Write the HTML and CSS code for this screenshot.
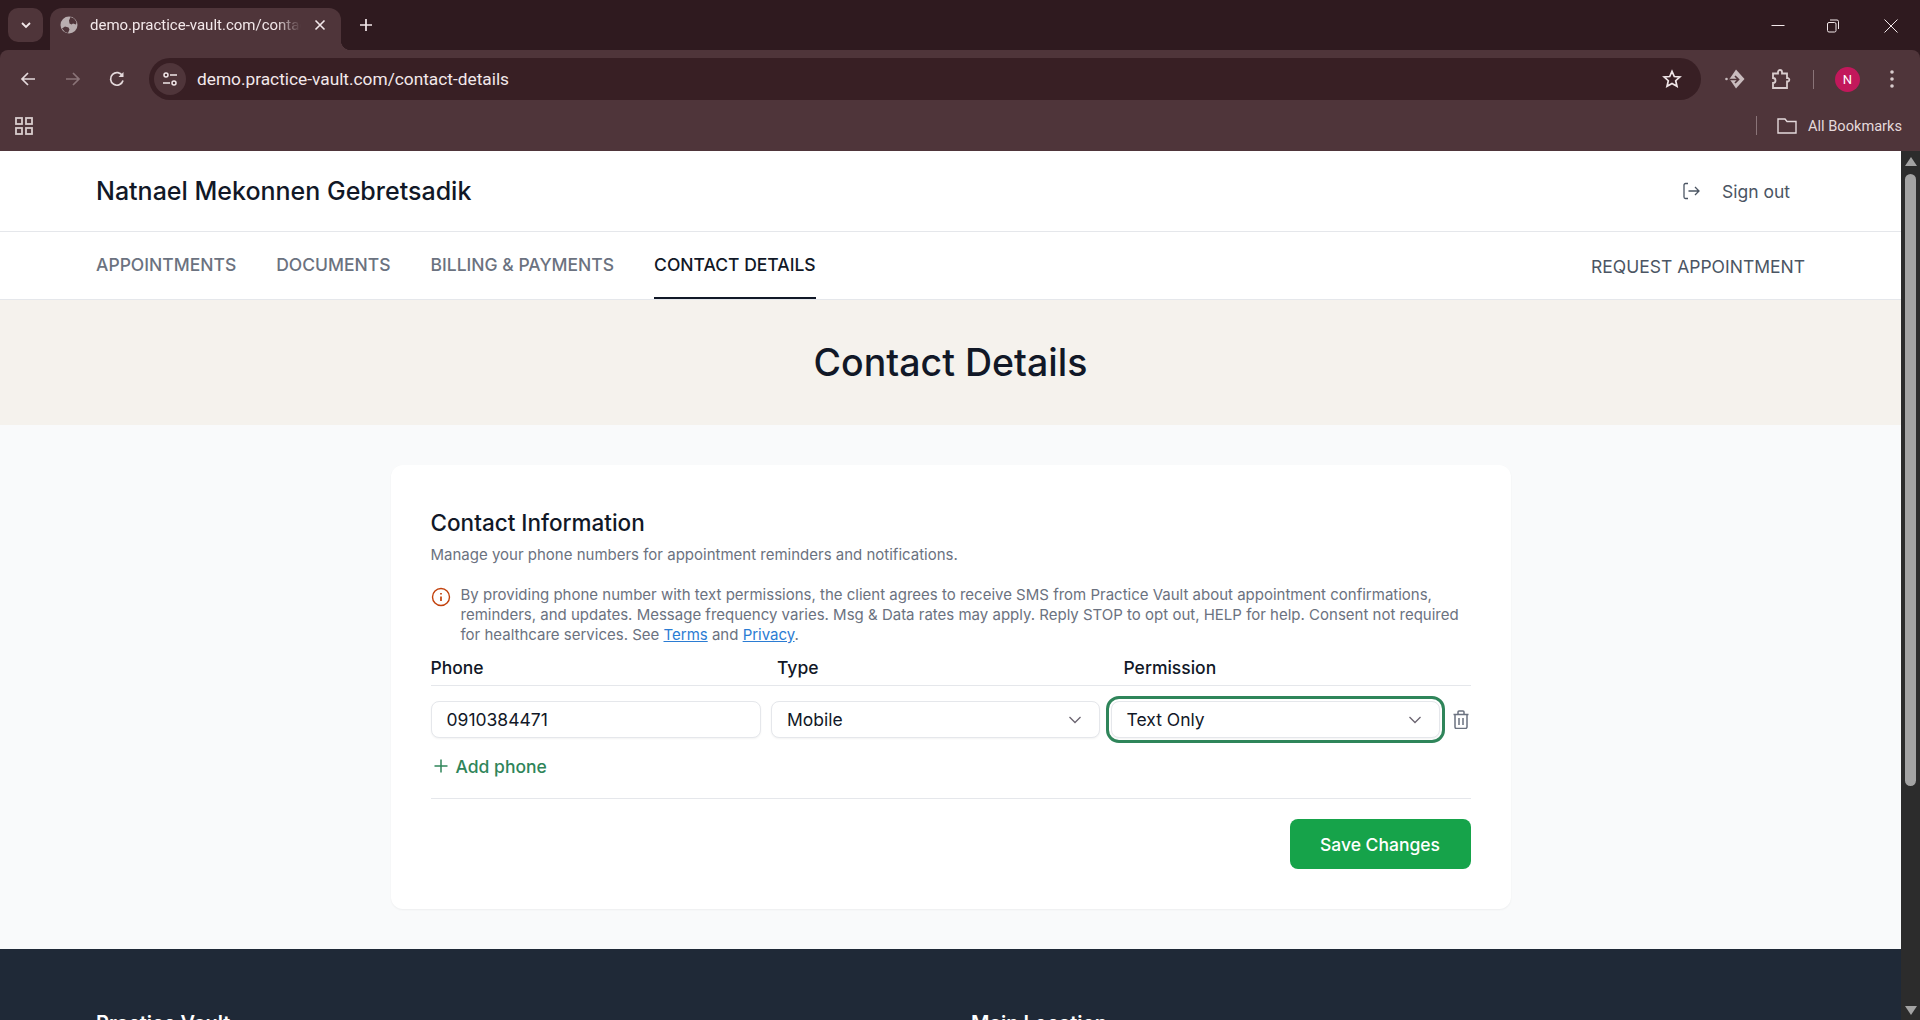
FILE: index.html
```html
<!DOCTYPE html>
<html lang="en">
<head>
    <meta charset="UTF-8">
    <title>Contact Details</title>
    <link rel="stylesheet" href="styles.css">
</head>
<body>
    <div class="browser">
        <div class="tabstrip">
            <div class="tab-search">
                <svg width="14" height="14" viewBox="0 0 14 14"><path d="M3 5l4 4 4-4" fill="none" stroke="#f3e8ea" stroke-width="1.8"/></svg>
            </div>
            <div class="tab">
                <svg class="tab-globe" width="18" height="18" viewBox="0 0 18 18"><circle cx="9" cy="9" r="8.500" fill="#b9aeb0"/><path d="M10.500 1l3.500 1.500 2.500 3.500-.5 2.500-3-1-1.500 1-2-1-.5-3zM2 12.500l3-2 3.500 1 1 2-1.500 3.500-3-1z" fill="#4f353a"/></svg>
                <span class="tab-title">demo.practice-vault.com/contact-details</span>
                <svg class="tab-close" width="14" height="14" viewBox="0 0 14 14"><path d="M2.500 2.500l9 9M11.500 2.500l-9 9" stroke="#f3e8ea" stroke-width="1.600"/></svg>
            </div>
            <svg class="new-tab" width="16" height="16" viewBox="0 0 16 16"><path d="M8 2v12M2 8h12" stroke="#f3e8ea" stroke-width="1.700"/></svg>
            <div class="window-btns">
                <svg width="14" height="14" viewBox="0 0 14 14"><path d="M0.500 6.500h13" stroke="#f3e8ea" stroke-width="1"/></svg>
                <svg width="14" height="14" viewBox="0 0 14 14"><rect x="1.500" y="3.500" width="8.500" height="9.500" rx="1.500" fill="none" stroke="#f3e8ea"/><path d="M4 1h7a1.500 1.500 0 0 1 1.500 1.500V10" fill="none" stroke="#f3e8ea"/></svg>
                <svg width="14" height="14" viewBox="0 0 14 14"><path d="M0.500 0.500l13 13M13.500 0.500l-13 13" stroke="#f3e8ea" stroke-width="1"/></svg>
            </div>
        </div>
        <div class="toolbar">
            <svg class="nav-icon" width="18" height="18" viewBox="0 0 18 18"><path d="M16 9H3M9 3L3 9l6 6" fill="none" stroke="#e4d9db" stroke-width="1.700"/></svg>
            <svg class="nav-icon" width="18" height="18" viewBox="0 0 18 18"><path d="M2 9h13M9 3l6 6-6 6" fill="none" stroke="#8a7478" stroke-width="1.700"/></svg>
            <svg class="nav-icon" width="18" height="18" viewBox="0 0 18 18"><path d="M14.500 6A6.300 6.300 0 1 0 15 10.500" fill="none" stroke="#e4d9db" stroke-width="1.700"/><path d="M15.500 2v5h-5z" fill="#e4d9db"/></svg>
            <div class="omnibox">
                <div class="site-info">
                    <svg width="16" height="16" viewBox="0 0 16 16" fill="none" stroke="#f0e6e8" stroke-width="1.500"><circle cx="4" cy="4" r="2"/><path d="M8 4h7M1 12h7"/><circle cx="12" cy="12" r="2"/></svg>
                </div>
                <span class="url">demo.practice-vault.com/contact-details</span>
                <svg class="star" width="20" height="20" viewBox="0 0 20 20"><path d="M10 2.300l2.300 5.200 5.600.5-4.200 3.700 1.300 5.500L10 14.400l-5 2.800 1.300-5.500L2.100 8l5.600-.5z" fill="none" stroke="#f0e6e8" stroke-width="1.700"/></svg>
            </div>
            <svg class="ext-icon" width="20" height="20" viewBox="0 0 20 20"><path d="M11 0.500l8.500 9.500-8.500 9.500L4.500 10z" fill="#c9bcbe"/><circle cx="1.500" cy="10" r="1.300" fill="#c9bcbe"/><path d="M5 10.500h8.500M10 7l3.500 3.500L10 14" fill="none" stroke="#4f353a" stroke-width="1.700"/></svg>
            <svg class="ext-icon puzzle" width="20" height="20" viewBox="0 0 20 20"><path d="M2 4.500h5V3a2 2 0 0 1 4 0v1.500h5v4.500h1a1.800 1.800 0 0 1 0 3.500h-1v6.500H2v-5a2.500 2.500 0 0 0 0-5z" fill="none" stroke="#d8cccd" stroke-width="1.800"/></svg>
            <div class="tool-sep"></div>
            <div class="avatar">N</div>
            <svg class="menu-icon" width="6" height="20" viewBox="0 0 6 20"><circle cx="3" cy="3" r="1.800" fill="#d8cccd"/><circle cx="3" cy="10" r="1.800" fill="#d8cccd"/><circle cx="3" cy="17" r="1.800" fill="#d8cccd"/></svg>
        </div>
        <div class="bookmarks">
            <svg width="18" height="18" viewBox="0 0 18 18" fill="none" stroke="#d8cccd" stroke-width="1.800"><rect x="1" y="1" width="6" height="6"/><rect x="11" y="1" width="6" height="6"/><rect x="1" y="11" width="6" height="6"/><rect x="11" y="11" width="6" height="6"/></svg>
            <div class="bookmarks-right">
                <div class="tool-sep short"></div>
                <svg width="20" height="16" viewBox="0 0 20 16"><path d="M1 1h7l2 2.500h9V15H1z" fill="none" stroke="#e4d9db" stroke-width="1.400"/></svg>
                <span>All Bookmarks</span>
            </div>
        </div>
    </div>

    <div class="viewport">
        <div class="page">
            <header class="site-header">
                <h1 class="client-name">Natnael Mekonnen Gebretsadik</h1>
                <a class="sign-out">
                    <svg width="20" height="20" viewBox="0 0 20 20" fill="none" stroke="#4b5563" stroke-width="1.300"><path d="M7 2.500H4.500A1.500 1.500 0 0 0 3 4v12a1.500 1.500 0 0 0 1.500 1.500H7M7.500 10H18M14 6l4 4-4 4"/></svg>
                    <span>Sign out</span>
                </a>
            </header>
            <nav class="site-nav">
                <a class="nav-link">APPOINTMENTS</a>
                <a class="nav-link">DOCUMENTS</a>
                <a class="nav-link">BILLING &amp; PAYMENTS</a>
                <a class="nav-link active">CONTACT DETAILS</a>
                <a class="nav-request">REQUEST APPOINTMENT</a>
            </nav>
            <section class="hero">
                <h2>Contact Details</h2>
            </section>
            <main class="content">
                <div class="card">
                    <h3>Contact Information</h3>
                    <p class="subtitle">Manage your phone numbers for appointment reminders and notifications.</p>
                    <div class="notice">
                        <svg width="20" height="20" viewBox="0 0 20 20" fill="none" stroke="#c2410c" stroke-width="1.400"><circle cx="10" cy="10" r="8.500"/><path d="M10 9.500v4.500M10 6v1.600" stroke-width="1.700"/></svg>
                        <p>By providing phone number with text permissions, the client agrees to receive SMS from Practice Vault about appointment confirmations, reminders, and updates. Message frequency varies. Msg &amp; Data rates may apply. Reply STOP to opt out, HELP for help. Consent not required for healthcare services. See <a>Terms</a> and <a>Privacy</a>.</p>
                    </div>
                    <div class="phone-head">
                        <span>Phone</span>
                        <span>Type</span>
                        <span>Permission</span>
                    </div>
                    <div class="phone-row">
                        <div class="field">0910384471</div>
                        <div class="field select">Mobile
                            <svg width="16" height="16" viewBox="0 0 16 16"><path d="M2.500 5l5.500 5.500L13.500 5" fill="none" stroke="#6b6470" stroke-width="1.300"/></svg>
                        </div>
                        <div class="field select focused">Text Only
                            <svg width="16" height="16" viewBox="0 0 16 16"><path d="M2.500 5l5.500 5.500L13.500 5" fill="none" stroke="#6b6470" stroke-width="1.300"/></svg>
                        </div>
                        <svg class="trash" width="16" height="19" viewBox="0 0 16 19" fill="none" stroke="#6b7280" stroke-width="1.500"><path d="M0.500 4.500h15M5 4.500V2a1 1 0 0 1 1-1h4a1 1 0 0 1 1 1v2.500M2 4.500V17a1.500 1.500 0 0 0 1.500 1.500h9A1.500 1.500 0 0 0 14 17V4.500M6 8v7M10 8v7"/></svg>
                    </div>
                    <a class="add-phone">
                        <svg width="18" height="18" viewBox="0 0 18 18"><path d="M9 2.500v13M2.500 9h13" stroke="#2f855a" stroke-width="1.500"/></svg>
                        Add phone
                    </a>
                    <div class="card-actions">
                        <button class="save-btn">Save Changes</button>
                    </div>
                </div>
            </main>
            <footer class="site-footer">
                <h4>Practice Vault</h4>
                <h4>Main Location</h4>
            </footer>
        </div>
        <div class="scrollbar">
            <div class="arrow-up"></div>
            <div class="thumb"></div>
            <div class="arrow-down"></div>
        </div>
    </div>
</body>
</html>
```

FILE: styles.css
```css
html, body {
    margin: 0;
    padding: 0;
    height: 1020px;
    overflow: hidden;
}

body {
    display: flex;
    flex-direction: column;
    font-family: Inter, "Liberation Sans", sans-serif;
    color: #111827;
}

h1, h2, h3, h4, p {
    margin: 0;
}

/* Browser chrome */
.browser {
    height: 151px;
    background: #2f1a1f;
    font-family: Roboto, "Liberation Sans", sans-serif;
    color: #f3e8ea;
    flex-shrink: 0;
}

.tabstrip {
    height: 50px;
    display: flex;
    align-items: flex-end;
    padding-left: 8px;
    box-sizing: border-box;
}

.tab-search {
    width: 35px;
    height: 34px;
    margin-bottom: 8px;
    background: #4f353a;
    border-radius: 10px;
    display: flex;
    align-items: center;
    justify-content: center;
}

.tab {
    position: relative;
    width: 291px;
    height: 42px;
    margin-left: 7px;
    background: #4f353a;
    border-radius: 12px 12px 0 0;
    display: flex;
    align-items: center;
    gap: 12px;
    padding: 0 14px 8px 10px;
    box-sizing: border-box;
    font-size: 15px;
}

/* concave corner where the tab meets the toolbar */
.tab::after {
    content: "";
    position: absolute;
    right: -10px;
    bottom: 0;
    width: 10px;
    height: 10px;
    background: radial-gradient(circle at 100% 0, transparent 10px, #4f353a 10.500px);
}

.tab-globe, .tab-close {
    flex-shrink: 0;
}

.tab-title {
    flex: 1;
    overflow: hidden;
    white-space: nowrap;
    -webkit-mask-image: linear-gradient(90deg, #000 88%, transparent);
    mask-image: linear-gradient(90deg, #000 88%, transparent);
}

.new-tab {
    margin: 0 0 17px 17px;
}

.window-btns {
    margin-left: auto;
    height: 48px;
    display: flex;
    align-items: center;
    padding: 0 22px 0 0;
}

.window-btns svg:nth-child(2) {
    margin: 0 44px 0 41px;
}

.toolbar {
    height: 58px;
    background: #4f353a;
    border-radius: 8px 8px 0 0;
    display: flex;
    align-items: center;
    padding-left: 19px;
    box-sizing: border-box;
}

.nav-icon {
    margin-right: 27px;
}

.nav-icon:nth-child(2) {
    margin-right: 26px;
}

.nav-icon:nth-child(3) {
    margin-right: 23px;
}

.omnibox {
    width: 1552px;
    height: 42px;
    background: #381f24;
    border-radius: 21px;
    display: flex;
    align-items: center;
    padding: 0 19px 0 5px;
    box-sizing: border-box;
    font-size: 17.300px;
}

.site-info {
    width: 32px;
    height: 32px;
    border-radius: 50%;
    background: #4f353a;
    display: flex;
    align-items: center;
    justify-content: center;
    margin-right: 11px;
}

.url {
    flex: 1;
    color: #f3e8ea;
}

.ext-icon {
    margin-left: 24px;
}

.ext-icon.puzzle {
    margin-left: 26px;
}

.tool-sep {
    width: 1px;
    height: 19px;
    background: #8a7478;
    margin-left: 22px;
}

.avatar {
    width: 25px;
    height: 25px;
    margin-left: 21px;
    border-radius: 50%;
    background: #c2185b;
    color: #fff;
    font-size: 13px;
    display: flex;
    align-items: center;
    justify-content: center;
}

.menu-icon {
    margin-left: 29px;
}

.bookmarks {
    height: 43px;
    background: #4f353a;
    display: flex;
    align-items: center;
    padding: 0 18px 8px 15px;
    box-sizing: border-box;
}

.bookmarks-right {
    margin-left: auto;
    display: flex;
    align-items: center;
    font-size: 14.600px;
    color: #e4d9db;
}

.bookmarks-right svg {
    margin: 0 11px 0 20px;
}

.tool-sep.short {
    margin-left: 0;
}

/* Page */
.viewport {
    flex: 1;
    display: flex;
    min-height: 0;
}

.page {
    flex: 1;
    min-width: 0;
    overflow: hidden;
    background: #f9fafb;
}

.site-header {
    height: 80px;
    background: #fff;
    border-bottom: 1px solid #e5e7eb;
    display: flex;
    align-items: center;
    justify-content: space-between;
    padding: 0 111px 0 96px;
}

.client-name {
    font-size: 25px;
    font-weight: 500;
    color: #111827;
}

.sign-out {
    display: flex;
    align-items: center;
    gap: 21px;
    font-size: 17.500px;
    color: #4b5563;
}

.site-nav {
    height: 67px;
    background: #fff;
    border-bottom: 1px solid #e5e7eb;
    display: flex;
    gap: 40px;
    padding: 0 96px;
}

.nav-link {
    font-size: 17.500px;
    font-weight: 500;
    color: #6b7280;
    line-height: 66px;
    border-bottom: 2px solid transparent;
    height: 67px;
    box-sizing: border-box;
}

.nav-link.active {
    color: #111827;
    border-bottom-color: #111827;
}

.nav-request {
    margin-left: auto;
    font-size: 17.500px;
    color: #4b5563;
    line-height: 70px;
}

.hero {
    height: 125px;
    background: #f5f2ed;
    display: flex;
    align-items: center;
    justify-content: center;
}

.hero h2 {
    font-size: 37.500px;
    font-weight: 500;
    color: #111827;
}

.content {
    padding: 40px 0;
}

.card {
    width: 1120px;
    height: 444px;
    margin: 0 auto;
    background: #fff;
    border-radius: 12px;
    box-shadow: 0 1px 2px rgba(0, 0, 0, 0.05);
    padding: 44px 40px 40px;
    box-sizing: border-box;
}

.card h3 {
    font-size: 22.500px;
    font-weight: 500;
    line-height: 28px;
}

.subtitle {
    margin-top: 8px;
    font-size: 15px;
    line-height: 20px;
    color: #6b7280;
}

.notice {
    margin-top: 20px;
    display: flex;
    gap: 10px;
    font-size: 15px;
    line-height: 20px;
    color: #6b7280;
}

.notice svg {
    flex-shrink: 0;
    margin-top: 2px;
}

.notice a {
    color: #2b7cd3;
    text-decoration: underline;
}

.phone-head {
    margin-top: 11px;
    display: grid;
    grid-template-columns: repeat(3, 346.500px);
    height: 29px;
    border-bottom: 1px solid #e5e7eb;
    font-size: 17.500px;
    font-weight: 500;
    line-height: 24px;
}

.phone-row {
    margin-top: 15px;
    display: flex;
    align-items: center;
    gap: 10.500px;
}

.field {
    width: 330px;
    height: 37px;
    background: #fff;
    border: 1px solid #e5e7eb;
    border-radius: 8px;
    box-shadow: 0 1px 2px rgba(0, 0, 0, 0.05);
    display: flex;
    align-items: center;
    justify-content: space-between;
    padding: 0 15px;
    box-sizing: border-box;
    font-size: 17.500px;
    color: #111827;
}

.field.select {
    width: 329px;
    padding-right: 16px;
}

.field.select svg {
    flex-shrink: 0;
}

.field.focused {
    width: 329.500px;
    outline: 3px solid #2f855a;
    outline-offset: 2px;
}

.trash {
    margin-left: 2.500px;
}

.add-phone {
    margin-top: 14px;
    display: flex;
    align-items: center;
    gap: 6px;
    font-size: 17.500px;
    font-weight: 500;
    color: #2f855a;
    height: 28px;
    padding-left: 1px;
}

.card-actions {
    margin-top: 18px;
    padding-top: 20px;
    border-top: 1px solid #e5e7eb;
    display: flex;
    justify-content: flex-end;
}

.save-btn {
    width: 181px;
    height: 50px;
    background: #16a34a;
    border: none;
    border-radius: 8px;
    color: #fff;
    font-family: inherit;
    font-size: 17.500px;
    font-weight: 500;
}

.site-footer {
    height: 200px;
    background: #1f2937;
    display: grid;
    grid-template-columns: 875px 1fr;
    padding: 62px 96px 0;
}

.site-footer h4 {
    font-size: 20px;
    font-weight: 600;
    color: #fff;
}

/* Scrollbar */
.scrollbar {
    width: 19px;
    flex-shrink: 0;
    background: #2c2c2c;
    display: flex;
    flex-direction: column;
    align-items: center;
}

.arrow-up {
    margin-top: 6px;
    border: 6.500px solid transparent;
    border-top: 0;
    border-bottom: 9px solid #a3a3a3;
}

.thumb {
    width: 11px;
    height: 612px;
    margin-top: 8px;
    background: #a3a3a3;
    border-radius: 6px;
}

.arrow-down {
    margin-top: auto;
    margin-bottom: 5px;
    border: 6.500px solid transparent;
    border-bottom: 0;
    border-top: 9px solid #a3a3a3;
}
```
